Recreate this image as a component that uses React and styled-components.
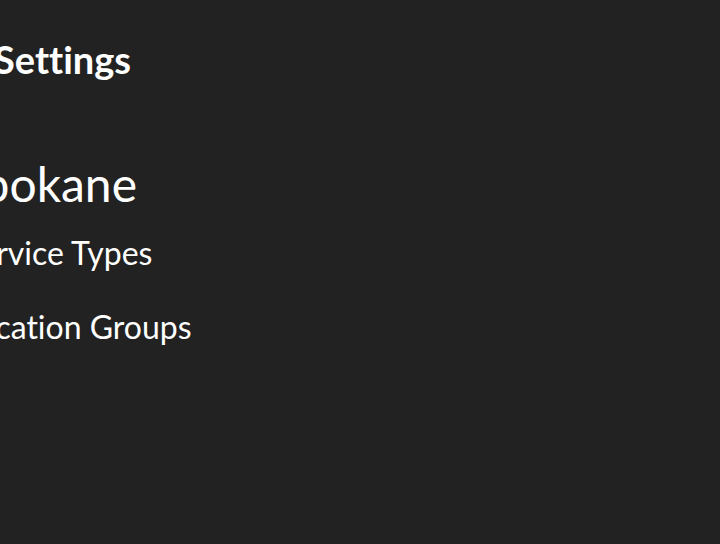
import React from 'react'
import styled, { createGlobalStyle } from 'styled-components'

const Global = createGlobalStyle`
  html, body {
    margin: 0;
    padding: 0;
    background: #222222;
    overflow: hidden;
  }
  body {
    font-family: Lato, "Noto Sans", sans-serif;
    color: #ffffff;
    font-variant-ligatures: none;
  }
`

const Page = styled.div`
  width: 720px;
  height: 544px;
  background: #222222;
  overflow: hidden;
`

const Title = styled.h1`
  margin: 0;
  padding-top: 36px;
  margin-left: -6px;
  font-size: 38px;
  font-weight: 700;
  line-height: 46px;
  white-space: nowrap;
`

const Area = styled.h2`
  margin: 0;
  margin-top: 74px;
  margin-left: -43px;
  font-size: 48px;
  font-weight: 400;
  line-height: 56px;
  white-space: nowrap;
`

const Menu = styled.nav`
  display: flex;
  flex-direction: column;
  gap: 36px;
  margin-top: 22px;
  margin-left: -38px;
`

const MenuItem = styled.a`
  font-size: 32px;
  line-height: 38px;
  color: #ffffff;
  text-decoration: none;
  white-space: nowrap;
`

export default function App() {
  return (
    <>
      <Global />
      <Page>
        <Title>Settings</Title>
        <Area>Spokane</Area>
        <Menu>
          <MenuItem href="#">Service Types</MenuItem>
          <MenuItem href="#">Location Groups</MenuItem>
        </Menu>
      </Page>
    </>
  )
}
